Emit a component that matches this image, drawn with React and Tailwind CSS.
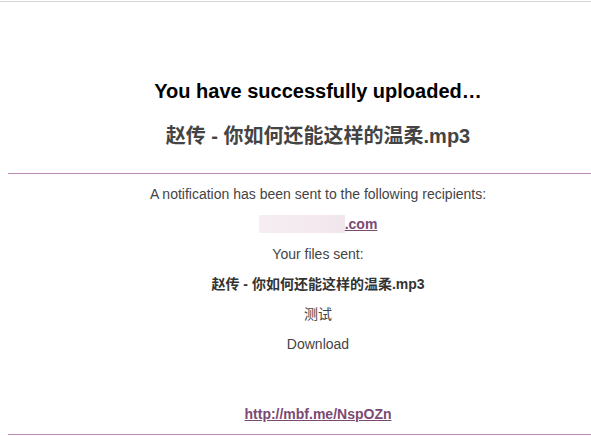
export default function App() {
  const font = { fontFamily: '"Liberation Sans", Arial, "Noto Sans CJK SC", sans-serif' };

  return (
    <div className="min-h-screen overflow-hidden bg-white" style={font}>
      {/* top rule */}
      <div className="pt-px">
        <div className="h-px bg-[#d6d6d6]" />
      </div>

      <div className="ml-2 w-[620px]">
        {/* HEADER */}
        <div className="pt-[74px] pb-[22px] text-center">
          <h1 className="h-[30px] text-[20px] font-bold leading-[30px] text-black">
            You have successfully uploaded…
          </h1>
          <h2 className="mt-[15px] h-[30px] text-[20px] font-bold leading-[30px] text-[#444]">
            赵传 - 你如何还能这样的温柔.mp3
          </h2>
        </div>

        <div className="h-px bg-[#b98bb2]" />

        {/* BODY */}
        <div className="pt-[5px] pb-[5px] text-center text-[14px] text-[#444]">
          <p className="h-[30px] leading-[30px]">
            A notification has been sent to the following recipients:
          </p>
          <p className="flex h-[30px] items-center justify-center">
            <span className="inline-block h-[18px] w-[86px] bg-gradient-to-r from-[#f6eef2] to-[#f1e6ec]" />
            <a href="#" className="font-bold text-[#7b4a73] underline">
              .com
            </a>
          </p>
          <p className="h-[30px] leading-[30px]">Your files sent:</p>
          <p className="h-[30px] font-bold leading-[30px] text-[#333]">
            赵传 - 你如何还能这样的温柔.mp3
          </p>
          <p className="h-[30px] leading-[30px]">测试</p>
          <p className="h-[30px] leading-[30px]">Download</p>

          <p className="mt-[40px] h-[30px] leading-[31px]">
            <a href="#" className="font-bold text-[#7b4a73] underline">
              http://mbf.me/NspOZn
            </a>
          </p>
        </div>
        <div className="h-px bg-[#b98bb2]" />
      </div>
    </div>
  );
}
